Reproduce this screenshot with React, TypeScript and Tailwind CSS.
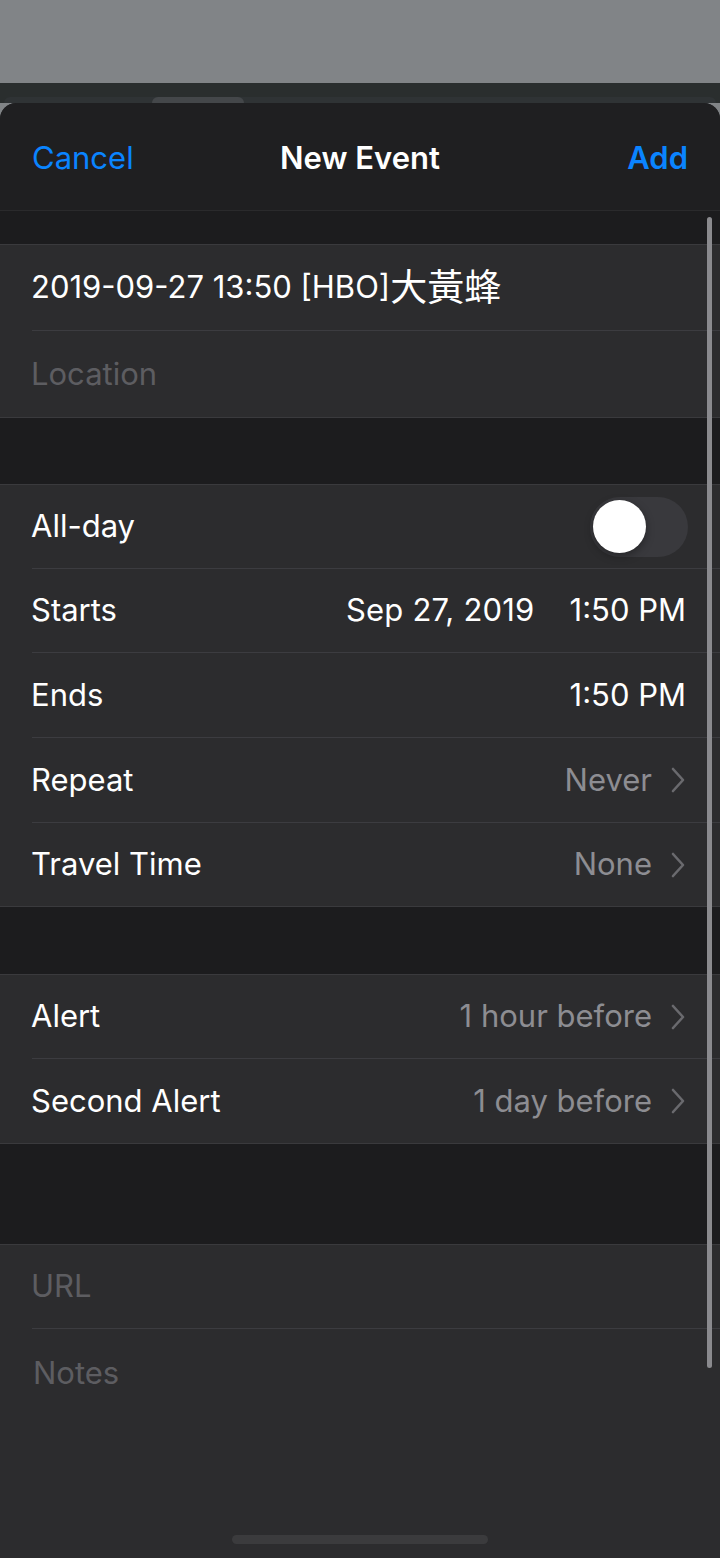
const font = { fontFamily: 'Inter, "Noto Sans CJK TC", sans-serif' };

const Divider = () => <div className="ml-8 h-px bg-[#3c3c40]" />;

const Chevron = () => (
  <svg className="ml-[19px] shrink-0" width="14" height="26" viewBox="0 0 14 26" fill="none">
    <path d="M2 2 L12 13 L2 24" stroke="#6a6a6e" strokeWidth="2.6" strokeLinecap="round" strokeLinejoin="round" />
  </svg>
);

const Row = ({ label, value, h = 'h-[83px]' }: { label: string; value: string; h?: string }) => (
  <div className={`flex ${h} items-center pl-[31px] pr-[35px]`}>
    <span className="flex-1 text-[31px] text-white">{label}</span>
    <span className="text-[31px] text-[#8d8d92]">{value}</span>
    <Chevron />
  </div>
);

const Gap = ({ h }: { h: string }) => <div className={`${h} shrink-0 border-y border-[#3a3a3d] bg-[#1c1c1e]`} />;

export default function App() {
  return (
    <div className="relative flex h-[1558px] w-[720px] flex-col overflow-hidden bg-[#818487]" style={font}>
      <div className="h-[83px] shrink-0" />
      <div className="flex h-[20px] shrink-0 flex-col bg-[#2a2e2e]">
        <div className="mx-1 mt-[14px] flex h-[6px] rounded-t-[14px] bg-[#2f3335] pl-[148px]">
          <div className="h-[6px] w-[92px] rounded-t-full bg-[#44474a]" />
        </div>
      </div>
      <div className="flex flex-1 flex-col overflow-hidden rounded-t-[16px] bg-[#2c2c2e]">
        <div className="grid h-[108px] shrink-0 grid-cols-3 items-center border-b border-[#2a2a2c] bg-[#1f1f21] px-8 pt-[4px]">
          <span className="text-[31px] text-[#0a84ff]">Cancel</span>
          <span className="text-center text-[31px] font-semibold text-white">New Event</span>
          <span className="text-right text-[31px] font-semibold text-[#0a84ff]">Add</span>
        </div>
        <div className="h-[33px] shrink-0 bg-[#1c1c1e]" />
        <div className="shrink-0 border-t border-[#3a3a3d]">
          <div className="flex h-[85px] items-center pl-[31px] text-[31px] text-white">
            2019-09-27 13:50 [HBO]<span className="text-[37px] leading-none">大黃蜂</span>
          </div>
          <Divider />
          <div className="flex h-[86px] items-center pl-[31px] text-[31px] text-[#5d5d61]">Location</div>
        </div>
        <Gap h="h-[68px]" />
        <div className="shrink-0">
          <div className="flex h-[83px] items-center pl-[31px] pr-8">
            <span className="flex-1 text-[31px] text-white">All-day</span>
            <div className="flex h-[60px] w-[98px] items-center rounded-full bg-[#39393d] px-[3px]">
              <div className="h-[53px] w-[53px] rounded-full bg-white shadow-[0_3px_8px_rgba(0,0,0,0.35)]" />
            </div>
          </div>
          <Divider />
          <div className="flex h-[83px] items-center pl-[31px] pr-[34px] text-[31px] text-white">
            <span className="flex-1">Starts</span>
            <span className="tracking-[0.2px]">Sep 27, 2019</span>
            <span className="ml-[35px]">1:50 PM</span>
          </div>
          <Divider />
          <div className="flex h-[84px] items-center pl-[31px] pr-[34px] text-[31px] text-white">
            <span className="flex-1">Ends</span>
            <span>1:50 PM</span>
          </div>
          <Divider />
          <Row label="Repeat" value="Never" h="h-[84px]" />
          <Divider />
          <Row label="Travel Time" value="None" />
        </div>
        <Gap h="h-[69px]" />
        <div className="shrink-0">
          <Row label="Alert" value="1 hour before" />
          <Divider />
          <Row label="Second Alert" value="1 day before" h="h-[84px]" />
        </div>
        <Gap h="h-[102px]" />
        <div className="flex-1">
          <div className="flex h-[83px] items-center pl-[31px] text-[31px] text-[#5d5d61]">URL</div>
          <Divider />
          <div className="flex h-[88px] items-center pl-[33px] text-[31px] text-[#5d5d61]">Notes</div>
        </div>
      </div>
      <div className="absolute right-[8px] top-[217px] h-[1151px] w-[5px] rounded-full bg-[#8a8a8e]" />
      <div className="absolute bottom-[14px] left-[232px] h-[9px] w-[256px] rounded-full bg-[#3b3b3d]" />
    </div>
  );
}
